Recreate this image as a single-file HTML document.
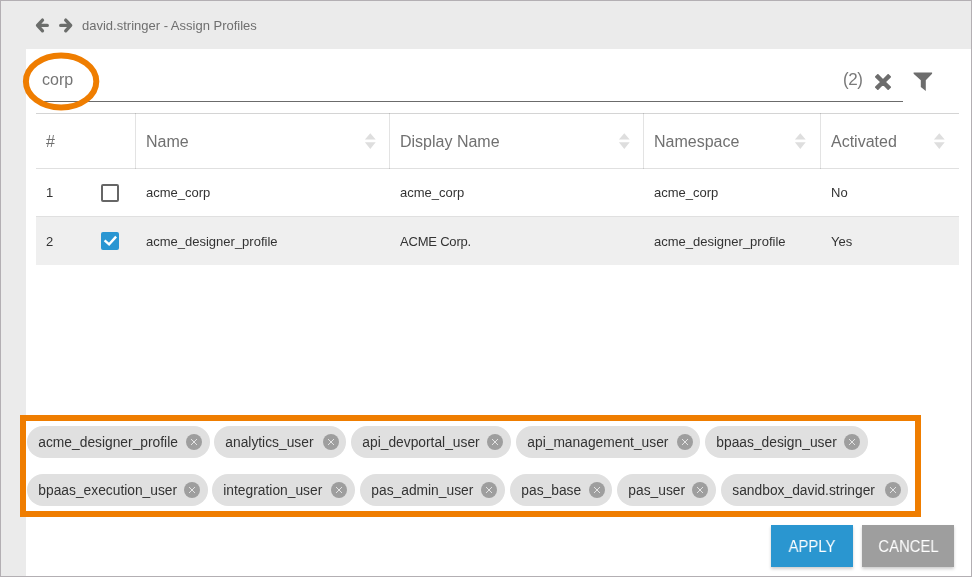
<!DOCTYPE html>
<html><head><meta charset="utf-8">
<style>
*{margin:0;padding:0;box-sizing:border-box}
html,body{width:972px;height:577px;overflow:hidden;background:#ebebeb}
body{font-family:"Liberation Sans",sans-serif;position:relative}
.frame{position:absolute;left:0;top:0;width:972px;height:577px;border:1px solid #b3afb3;background:#ebebeb}
.abs{position:absolute}
.panel{position:absolute;left:26px;top:49px;width:945px;height:527px;background:#fff}
.t{position:absolute;white-space:nowrap;line-height:1;will-change:transform}
.title{left:82px;top:19px;font-size:13px;color:#6f6f6f}
.corp{left:42px;top:72px;font-size:16px;color:#757575}
.uline{position:absolute;left:36px;top:101px;width:867px;height:1px;background:#6b6b6b}
.count{left:843px;top:71px;letter-spacing:-0.5px;font-size:17px;color:#7a7a7a}
.pr{display:inline-block;transform:translateY(-1px) scaleY(1.13)}
.tbl-top{position:absolute;left:36px;top:113px;width:923px;height:1px;background:rgba(0,0,0,.17)}
.hdr-bot{position:absolute;left:36px;top:168px;width:923px;height:1px;background:rgba(0,0,0,.12)}
.r1-bot{position:absolute;left:36px;top:216px;width:923px;height:1px;background:#e0e0e0}
.r2{position:absolute;left:36px;top:217px;width:923px;height:48px;background:#efefef}
.vd{position:absolute;top:113px;width:1px;height:56px;background:rgba(0,0,0,.11)}
.th{font-size:16px;color:#707070;top:134px}
.td{font-size:13px;color:#333;}
.sort{position:absolute;width:10px;height:16px;overflow:visible}
.cb{position:absolute;left:101px;width:18px;height:18px;border-radius:2px}
.cb0{top:184px;border:2px solid #666}
.cb1{top:232px;background:#2a96d2}
.chip{position:absolute;height:32px;border-radius:16px;background:#e0e0e0;font-size:13.8px;will-change:transform;color:#333;line-height:32px;padding-left:11.3px;padding-top:1px;white-space:nowrap}
.chip .x{position:absolute;top:8px;width:16px;height:16px;border-radius:8px;background:#9e9e9e}
.btn{position:absolute;top:525px;height:42px;color:#fff;font-size:16.5px;line-height:42px;text-align:center;box-shadow:0 2px 3px rgba(0,0,0,.2)}
.btn span{display:inline-block;transform:scaleX(0.9);will-change:transform}
</style></head><body>
<div class="frame"></div>
<div class="panel"></div>

<!-- header arrows -->
<svg class="abs" style="left:32px;top:14px" width="44" height="22" viewBox="0 0 44 22">
  <path d="M15.3 11.4H5.8M10.5 6.1L5.5 11.4L10.5 16.8" fill="none" stroke="#6b6d6b" stroke-width="3.3" stroke-linecap="round" stroke-linejoin="round"/>
  <path d="M28.7 11.4H38.4M33.7 6.1L38.7 11.4L33.7 16.8" fill="none" stroke="#6b6d6b" stroke-width="3.3" stroke-linecap="round" stroke-linejoin="round"/>
</svg>
<div class="t title">david.stringer - Assign Profiles</div>

<!-- search -->
<div class="t corp">corp</div>
<div class="uline"></div>
<div class="t count"><span class="pr">(</span>2<span class="pr">)</span></div>
<svg class="abs" style="left:875px;top:74px" width="16" height="16" viewBox="0 0 16 16">
  <path d="M15.20 13.15 L13.15 15.20 L8.00 10.05 L2.85 15.20 L0.80 13.15 L5.95 8.00 L0.80 2.85 L2.85 0.80 L8.00 5.95 L13.15 0.80 L15.20 2.85 L10.05 8.00Z" fill="#6d6d6d" stroke="#6d6d6d" stroke-width="1.6" stroke-linejoin="round"/>
</svg>
<svg class="abs" style="left:913px;top:72px" width="20" height="20" viewBox="0 0 20 20">
  <path d="M0.6 0.5H19.1V1.8L12.8 8.2V19L7.8 15V8.2L0.6 1.8Z" fill="#6d6d6d"/>
</svg>

<!-- table -->
<div class="tbl-top"></div>
<div class="hdr-bot"></div>
<div class="vd" style="left:135px"></div>
<div class="vd" style="left:389px"></div>
<div class="vd" style="left:643px"></div>
<div class="vd" style="left:820px"></div>
<div class="t th" style="left:46px">#</div>
<div class="t th" style="left:146px">Name</div>
<div class="t th" style="left:400px">Display Name</div>
<div class="t th" style="left:654px">Namespace</div>
<div class="t th" style="left:831px">Activated</div>
<svg class="sort" style="left:365px;top:133px" viewBox="0 0 10 16"><path d="M5.3 0.2L10.7 6.5H-0.1Z M-0.1 9.2H10.7L5.3 15.9Z" fill="#dedede"/></svg>
<svg class="sort" style="left:619px;top:133px" viewBox="0 0 10 16"><path d="M5.3 0.2L10.7 6.5H-0.1Z M-0.1 9.2H10.7L5.3 15.9Z" fill="#dedede"/></svg>
<svg class="sort" style="left:795px;top:133px" viewBox="0 0 10 16"><path d="M5.3 0.2L10.7 6.5H-0.1Z M-0.1 9.2H10.7L5.3 15.9Z" fill="#dedede"/></svg>
<svg class="sort" style="left:934px;top:133px" viewBox="0 0 10 16"><path d="M5.3 0.2L10.7 6.5H-0.1Z M-0.1 9.2H10.7L5.3 15.9Z" fill="#dedede"/></svg>

<div class="r1-bot"></div>
<div class="r2"></div>
<div class="t td" style="left:46px;top:186px">1</div>
<div class="cb cb0"></div>
<div class="t td" style="left:146px;top:186px">acme_corp</div>
<div class="t td" style="left:400px;top:186px">acme_corp</div>
<div class="t td" style="left:654px;top:186px">acme_corp</div>
<div class="t td" style="left:831px;top:186px">No</div>

<div class="t td" style="left:46px;top:235px">2</div>
<div class="cb cb1"><svg width="18" height="18" viewBox="0 0 18 18" style="display:block"><path d="M3.6 8.3L8.1 12.4L15.1 4.6" fill="none" stroke="#fff" stroke-width="2.4"/></svg></div>
<div class="t td" style="left:146px;top:235px">acme_designer_profile</div>
<div class="t td" style="left:400px;top:235px;letter-spacing:-0.2px">ACME Corp.</div>
<div class="t td" style="left:654px;top:235px">acme_designer_profile</div>
<div class="t td" style="left:831px;top:235px">Yes</div>

<!-- orange ellipse -->
<svg class="abs" style="left:0;top:0;pointer-events:none" width="972" height="577">
  <ellipse cx="61.1" cy="81.5" rx="35.2" ry="26" fill="none" stroke="#ef7d00" stroke-width="6"/>
  <rect x="23" y="418" width="895" height="96" fill="none" stroke="#ef7d00" stroke-width="6"/>
</svg>

<!-- chips -->
<div class="chip" style="left:26.9px;top:426px;width:182.9px">acme_designer_profile<div class="x" style="right:7.8px"><svg width="16" height="16" viewBox="0 0 16 16" style="display:block"><path d="M5 5L11 11M11 5L5 11" stroke="#f0f0f0" stroke-width="0.85"/></svg></div></div>
<div class="chip" style="left:214.2px;top:426px;width:132.3px">analytics_user<div class="x" style="right:7.8px"><svg width="16" height="16" viewBox="0 0 16 16" style="display:block"><path d="M5 5L11 11M11 5L5 11" stroke="#f0f0f0" stroke-width="0.85"/></svg></div></div>
<div class="chip" style="left:351.3px;top:426px;width:160.2px">api_devportal_user<div class="x" style="right:7.8px"><svg width="16" height="16" viewBox="0 0 16 16" style="display:block"><path d="M5 5L11 11M11 5L5 11" stroke="#f0f0f0" stroke-width="0.85"/></svg></div></div>
<div class="chip" style="left:516.3px;top:426px;width:184.3px">api_management_user<div class="x" style="right:7.8px"><svg width="16" height="16" viewBox="0 0 16 16" style="display:block"><path d="M5 5L11 11M11 5L5 11" stroke="#f0f0f0" stroke-width="0.85"/></svg></div></div>
<div class="chip" style="left:705.2px;top:426px;width:162.6px">bpaas_design_user<div class="x" style="right:7.8px"><svg width="16" height="16" viewBox="0 0 16 16" style="display:block"><path d="M5 5L11 11M11 5L5 11" stroke="#f0f0f0" stroke-width="0.85"/></svg></div></div>
<div class="chip" style="left:26.9px;top:474px;width:180.8px">bpaas_execution_user<div class="x" style="right:7.8px"><svg width="16" height="16" viewBox="0 0 16 16" style="display:block"><path d="M5 5L11 11M11 5L5 11" stroke="#f0f0f0" stroke-width="0.85"/></svg></div></div>
<div class="chip" style="left:212.4px;top:474px;width:143.2px">integration_user<div class="x" style="right:7.8px"><svg width="16" height="16" viewBox="0 0 16 16" style="display:block"><path d="M5 5L11 11M11 5L5 11" stroke="#f0f0f0" stroke-width="0.85"/></svg></div></div>
<div class="chip" style="left:360.2px;top:474px;width:145.2px">pas_admin_user<div class="x" style="right:7.8px"><svg width="16" height="16" viewBox="0 0 16 16" style="display:block"><path d="M5 5L11 11M11 5L5 11" stroke="#f0f0f0" stroke-width="0.85"/></svg></div></div>
<div class="chip" style="left:510.3px;top:474px;width:102.4px">pas_base<div class="x" style="right:7.8px"><svg width="16" height="16" viewBox="0 0 16 16" style="display:block"><path d="M5 5L11 11M11 5L5 11" stroke="#f0f0f0" stroke-width="0.85"/></svg></div></div>
<div class="chip" style="left:617.4px;top:474px;width:99.1px">pas_user<div class="x" style="right:7.8px"><svg width="16" height="16" viewBox="0 0 16 16" style="display:block"><path d="M5 5L11 11M11 5L5 11" stroke="#f0f0f0" stroke-width="0.85"/></svg></div></div>
<div class="chip" style="left:721.3px;top:474px;width:187.4px">sandbox_david.stringer<div class="x" style="right:7.8px"><svg width="16" height="16" viewBox="0 0 16 16" style="display:block"><path d="M5 5L11 11M11 5L5 11" stroke="#f0f0f0" stroke-width="0.85"/></svg></div></div>

<div class="btn" style="left:771px;width:82px;background:#2a96d0"><span>APPLY</span></div>
<div class="btn" style="left:862px;width:92px;background:#9e9e9e"><span>CANCEL</span></div>
</body></html>
